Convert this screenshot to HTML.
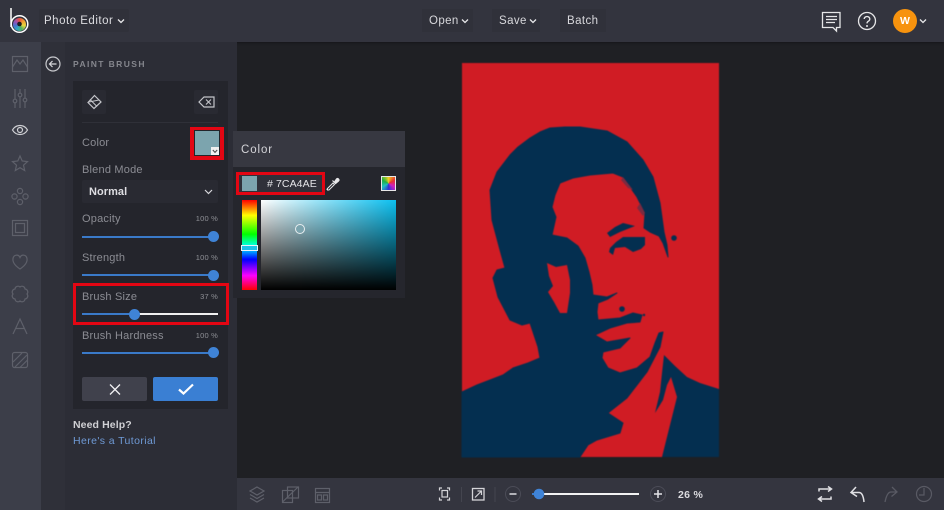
<!DOCTYPE html>
<html><head><meta charset="utf-8"><style>
html,body{margin:0;padding:0;width:944px;height:510px;overflow:hidden;background:#1f2024}
body{position:relative;font-family:"Liberation Sans",sans-serif}
.a{position:absolute}
.t{position:absolute;white-space:nowrap;line-height:14px}
.lab{font-size:11px;color:#8b8c93;letter-spacing:.2px}
.pct{font-size:7.5px;color:#8f9096;letter-spacing:.2px;text-align:right;width:50px}
.track{position:absolute;height:2px;background:#3a7ac9}
.knob{position:absolute;width:11px;height:11px;border-radius:50%;background:#3f83d6}
svg{position:absolute;overflow:visible}
.ic{fill:none;stroke:#5e606a;stroke-width:1.2}
.w{fill:none;stroke:#e6e6e8;stroke-width:1.3}
</style></head><body>
<!-- portrait -->
<svg style="left:0;top:0;filter:blur(.5px)" width="944" height="510">
<rect x="462" y="63" width="257" height="394" fill="#d01c24"/>
<path fill="#042f50" stroke="#042f50" stroke-width="1" stroke-linejoin="round" d="M550 128 565 127 580 127 607 131 627 142 643 160 653 177 660 203 664 232 667 245 668 257 663 243 659 236 650 232 644 228 645 213 637 197 623 177 613 173 590 175 573 178 560 183 555 195 552 207 556 217 552 235 567 238 578 246 585 258 589 272 592 285 593 295 607 297 617 293 608 299 598 303 597 312 598 320 620 318 633 313 642 315 640 322 627 323 610 328 595 335 607 342 630 338 620 348 603 352 602 358 608 368 620 373 637 368 650 357 655 343 659 333 663 332 660 347 647 372 627 398 608 413 623 423 620 433 597 440 588 445 580 457 462 457 462 392 477 385 503 375 513 368 528 363 540 358 538 347 530 323 522 325 510 320 498 297 493 278 497 270 505 268 500 250 492 220 490 190 497 172 510 155 518 147 530 138 540 132Z"/>
<path fill="#042f50" d="M664 355 675 366 687 377 700 383 719 389 719 457 662 457 670 425 677 397 671 377 667 385 663 400 655 413 660 392 662 373Z"/>
<path fill="#d01c24" d="M547 263 556 267 567 265 570 280 570 293 567 313 560 313 554 302 548 292 553 286 549 276Z"/>
<path fill="#042f50" d="M607 233 615 227 623 223 635 226 620 232 610 237ZM610 248 616 242 623 237 645 237 645 245 641 249 633 252 625 247 615 248 613 255 609 252Z"/>
<circle cx="674" cy="238" r="2.8" fill="#042f50"/><circle cx="622" cy="309" r="2.8" fill="#042f50"/><circle cx="644" cy="315" r="1.2" fill="#042f50"/>
<path fill="#7c2a40" d="M623 177 633 190 628 188 621 180ZM640 203 645 213 643 216 637 208Z"/>
</svg>

<!-- top bar -->
<div class="a" style="left:0;top:0;width:944px;height:42px;background:#33343e;box-shadow:0 1px 2px #15161a"></div>
<!-- logo -->
<div class="a" style="left:13px;top:18px;width:13px;height:13px;border-radius:50%;background:conic-gradient(#e9503f,#f0a030,#e8d840,#50b060,#30a8c0,#4a70d0,#a050b0,#e9503f)"></div>
<svg style="left:0;top:0" width="40" height="42">
<path d="M11 8V27" stroke="#fff" stroke-width="1.5" fill="none"/>
<circle cx="19.5" cy="24" r="8.300" fill="none" stroke="#fff" stroke-width="1.500"/>
<circle cx="19.500" cy="24" r="2.300" fill="#1d1e22"/>
</svg>
<div class="a" style="left:39px;top:9px;width:90px;height:23px;background:#30313a;border-radius:2px"></div>
<div class="t" style="left:44px;top:14px;font-size:11.5px;color:#dcdce0;letter-spacing:.5px">Photo Editor</div>
<svg style="left:117px;top:18px" width="8" height="6"><path d="M1 1.5 4 4.5 7 1.5" class="w" stroke-width="1"/></svg>
<div class="a" style="left:422px;top:9px;width:51px;height:23px;background:#30313a"></div>
<div class="a" style="left:492px;top:9px;width:48px;height:23px;background:#30313a"></div>
<div class="a" style="left:560px;top:9px;width:46px;height:23px;background:#30313a"></div>
<div class="t" style="left:429px;top:14px;font-size:11.5px;color:#d8d8dc;letter-spacing:.4px">Open</div>
<svg style="left:461px;top:18px" width="8" height="6"><path d="M1 1.5 4 4.5 7 1.5" class="w" stroke-width="1"/></svg>
<div class="t" style="left:499px;top:14px;font-size:11.5px;color:#d8d8dc;letter-spacing:.4px">Save</div>
<svg style="left:529px;top:18px" width="8" height="6"><path d="M1 1.5 4 4.5 7 1.5" class="w" stroke-width="1"/></svg>
<div class="t" style="left:567px;top:14px;font-size:11.5px;color:#d8d8dc;letter-spacing:.4px">Batch</div>
<!-- top right -->
<svg style="left:820px;top:10px" width="22" height="22"><path d="M2.5 2.5H20V17.5H16.5V21L13 17.5H2.5Z" class="w" stroke-width="1.2"/><path d="M6 6.5H17M6 9.5H17M6 12.5H15" class="w" stroke-width="1"/></svg>
<svg style="left:857px;top:11px" width="20" height="20"><circle cx="10" cy="10" r="8.5" class="w" stroke-width="1.2"/><path d="M7.2 8a2.8 2.5 0 1 1 4.2 2.2c-1 .6-1.4 1-1.4 2.2" class="w" stroke-width="1.5"/><circle cx="10" cy="15" r="1" fill="#e6e6e8"/></svg>
<div class="a" style="left:893px;top:9px;width:24px;height:24px;border-radius:50%;background:#f7930e"></div>
<div class="t" style="left:893px;top:14px;width:24px;text-align:center;font-size:10.5px;font-weight:bold;color:#fff">W</div>
<svg style="left:919px;top:18px" width="8" height="6"><path d="M1 1.5 4 4.5 7 1.5" class="w" stroke-width="1"/></svg>

<!-- left rail -->
<div class="a" style="left:0;top:42px;width:41px;height:468px;background:#3c3e49"></div>
<div class="a" style="left:41px;top:42px;width:196px;height:468px;background:#2c2d36"></div>
<div class="a" style="left:41px;top:42px;width:24px;height:468px;background:#2f3039"></div>
<svg style="left:0;top:42px" width="41" height="340">
<g class="ic">
<rect x="12.5" y="14.5" width="15" height="15"/><path d="M12.5 25 17 18 20 22 23 18 27.5 25"/>
<path d="M15 47V66M20 47V66M25 47V66" /><circle cx="15" cy="59" r="1.8" fill="#3c3e49"/><circle cx="20" cy="53" r="1.8" fill="#3c3e49"/><circle cx="25" cy="58" r="1.8" fill="#3c3e49"/>
<path d="M12.5 88C16 82 24 82 27.5 88 24 94 16 94 12.5 88Z" stroke="#cfd0d4"/><circle cx="20" cy="88" r="2.5" stroke="#cfd0d4"/>
<path d="M20 114 22.2 119 27.5 119.6 23.5 123.2 24.7 128.5 20 125.7 15.3 128.5 16.5 123.2 12.5 119.6 17.8 119Z"/>
<circle cx="20" cy="149" r="2.6"/><circle cx="20" cy="160" r="2.6"/><circle cx="14.5" cy="154.5" r="2.6"/><circle cx="25.5" cy="154.5" r="2.6"/>
<rect x="12.5" y="178.5" width="15" height="15"/><rect x="15.5" y="181.5" width="9" height="9"/>
<path d="M20 227C14 223 12.5 219.5 13 216.5 13.7 212.5 18.5 212 20 215.5 21.5 212 26.3 212.5 27 216.5 27.5 219.5 26 223 20 227Z"/>
<path d="M20 245A3 3 0 0 1 25 247A3 3 0 0 1 27 252A3 3 0 0 1 25 257A3 3 0 0 1 20 259A3 3 0 0 1 15 257A3 3 0 0 1 13 252A3 3 0 0 1 15 247A3 3 0 0 1 20 245Z"/>
<path d="M13 292 20 277 27 292M15.5 286.5H24.5"/>
<rect x="12.5" y="310.5" width="15" height="15" rx="2"/><path d="M13 320 22 311M15 325 27 313M20 325.5 27.5 318" />
</g></svg>
<svg style="left:45px;top:56px" width="16" height="16"><circle cx="8" cy="8" r="7" fill="none" stroke="#c8c9cd" stroke-width="1.2"/><path d="M11.5 8H4.5M7.5 5 4.5 8 7.5 11" fill="none" stroke="#d8d8dc" stroke-width="1.2"/></svg>
<div class="t" style="left:73px;top:57px;font-size:8.5px;font-weight:bold;color:#85868d;letter-spacing:1.4px">PAINT BRUSH</div>

<!-- card -->
<div class="a" style="left:73px;top:81px;width:155px;height:328px;background:#24252c"></div>
<div class="a" style="left:82px;top:90px;width:24px;height:24px;background:#292a32;border-radius:2px"></div>
<div class="a" style="left:194px;top:90px;width:24px;height:24px;background:#292a32;border-radius:2px"></div>
<svg style="left:82px;top:90px" width="24" height="24"><path d="M12.5 5.5 19 12 12 18.5 6 12.5Z" fill="none" stroke="#c4c5ca" stroke-width="1.2"/><path d="M8 9.5 15 16.5M7 12 17 10" stroke="#c4c5ca" stroke-width="1"/></svg>
<svg style="left:194px;top:90px" width="24" height="24"><path d="M5 12 10 7H20V17H10Z" fill="none" stroke="#c4c5ca" stroke-width="1.2"/><path d="M12 9.5 17 14.5M17 9.5 12 14.5" stroke="#c4c5ca" stroke-width="1.1"/></svg>
<div class="a" style="left:82px;top:122px;width:136px;height:1px;background:#2f3038"></div>

<div class="t lab" style="left:82px;top:136px">Color</div>
<div class="a" style="left:190px;top:127px;width:34px;height:33px;background:#e30613"></div>
<div class="a" style="left:195px;top:131px;width:24px;height:24px;background:#7ca4ae;outline:1px solid #23242a"></div>
<div class="a" style="left:211px;top:147px;width:8px;height:8px;background:#f0f0f0"></div>
<svg style="left:212px;top:149px" width="6" height="5"><path d="M.8 1 3 3.4 5.2 1" fill="none" stroke="#444" stroke-width="1"/></svg>
<div class="t lab" style="left:82px;top:163px">Blend Mode</div>
<div class="a" style="left:82px;top:180px;width:136px;height:23px;background:#292a32;border-radius:2px"></div>
<div class="t" style="left:89px;top:185px;font-size:11px;font-weight:bold;color:#dedee2;letter-spacing:.05px">Normal</div>
<svg style="left:204px;top:189px" width="9" height="6"><path d="M1 1 4.5 4.5 8 1" fill="none" stroke="#d8d8dc" stroke-width="1.2"/></svg>

<div class="t lab" style="left:82px;top:212px">Opacity</div><div class="t pct" style="left:168px;top:212px">100 %</div>
<div class="track" style="left:82px;top:235.5px;width:131px"></div><div class="knob" style="left:208px;top:231px"></div>
<div class="t lab" style="left:82px;top:251px">Strength</div><div class="t pct" style="left:168px;top:251px">100 %</div>
<div class="track" style="left:82px;top:274px;width:131px"></div><div class="knob" style="left:208px;top:270px"></div>

<div class="a" style="left:73px;top:283px;width:156px;height:42px;box-sizing:border-box;border:3.5px solid #e30613"></div>
<div class="t lab" style="left:82px;top:290px">Brush Size</div><div class="t pct" style="left:168px;top:290px">37 %</div>
<div class="track" style="left:82px;top:313px;width:52px"></div>
<div class="a" style="left:134px;top:313px;width:84px;height:2px;background:#f0f0f0"></div>
<div class="knob" style="left:129px;top:308.5px"></div>

<div class="t lab" style="left:82px;top:329px">Brush Hardness</div><div class="t pct" style="left:168px;top:329px">100 %</div>
<div class="track" style="left:82px;top:352px;width:131px"></div><div class="knob" style="left:208px;top:347px"></div>

<div class="a" style="left:82px;top:377px;width:65px;height:24px;background:#40414c;border-radius:2px"></div>
<div class="a" style="left:153px;top:377px;width:65px;height:24px;background:#3a7fd3;border-radius:2px"></div>
<svg style="left:82px;top:377px" width="136" height="24"><path d="M28 7.5 38 17.5M38 7.5 28 17.5" stroke="#f0f0f2" stroke-width="1.3"/><path d="M97 12.5 101.5 16.5 111 7.5" fill="none" stroke="#fff" stroke-width="2.2"/></svg>

<div class="t" style="left:73px;top:418px;font-size:10.5px;font-weight:bold;color:#d0d0d4;letter-spacing:.1px">Need Help?</div>
<div class="t" style="left:73px;top:434px;font-size:10.5px;color:#6f9ad6;letter-spacing:.4px">Here's a Tutorial</div>

<!-- color popup -->
<div class="a" style="left:233px;top:131px;width:172px;height:167px;background:#25262d"></div>
<div class="a" style="left:233px;top:131px;width:172px;height:36px;background:#373841"></div>
<div class="t" style="left:241px;top:143px;font-size:11.5px;color:#d4d4d8;letter-spacing:.9px">Color</div>
<div class="a" style="left:236px;top:172px;width:89px;height:23px;box-sizing:border-box;border:3px solid #e30613;background:#30313a"></div>
<div class="a" style="left:242px;top:176px;width:15px;height:15px;background:#7ca4ae"></div>
<div class="t" style="left:267px;top:176.500px;font-size:10.5px;color:#e4e4e8;letter-spacing:.1px"># 7CA4AE</div>
<svg style="left:325px;top:177px" width="14" height="14"><path d="M2 12 1.5 12.5M2.5 11.5 8 6 9.5 7.5 4 13H2.5Z" fill="none" stroke="#e8e8ea" stroke-width="1"/><path d="M7.500 3.500 11 7M9.500 5 11.500 2a1.300 1.300 0 0 1 2 2L10.500 6.500" fill="#e8e8ea" stroke="#e8e8ea" stroke-width="1.200"/></svg>
<div class="a" style="left:381px;top:176px;width:15px;height:15px;box-sizing:border-box;border:1px solid #e8e8e8;background:conic-gradient(#f0d020,#e83030,#d020c0,#3030d0,#20c0c0,#20b040,#f0d020)"></div>
<div class="a" style="left:242px;top:200px;width:15px;height:90px;background:linear-gradient(to bottom,#f00 0%,#ff0 17%,#0f0 38%,#0ff 52%,#00f 66%,#f0f 84%,#f00 100%)"></div>
<div class="a" style="left:241px;top:245px;width:17px;height:6px;box-sizing:border-box;border:1px solid #e8f4f8;background:#1cc0ea"></div>
<div class="a" style="left:261px;top:200px;width:135px;height:90px;background:linear-gradient(to bottom,rgba(0,0,0,0),#000),linear-gradient(to right,#fff,#0cc0f0)"></div>
<div class="a" style="left:295px;top:224px;width:10px;height:10px;box-sizing:border-box;border-radius:50%;border:1.500px solid #e8eef0;background:#7ca4ae"></div>

<!-- bottom bar -->
<div class="a" style="left:237px;top:478px;width:707px;height:32px;background:#34353f"></div>
<svg style="left:237px;top:478px" width="707" height="32">
<g class="ic" transform="translate(0,4)">
<path d="M20 5 27 9 20 13 13 9ZM13 12.5 20 16.5 27 12.5M13 16 20 20 27 16"/>
<rect x="45.5" y="8.5" width="10" height="12"/><rect x="50.5" y="5" width="11" height="11"/><path d="M45.5 20 61 5"/>
<rect x="78.5" y="6.5" width="14" height="14"/><path d="M78.5 10.5H92.5M80.5 13H84.5V18H80.5ZM86.5 13H90.500V18H86.500Z"/>
</g>
<g fill="none" stroke="#d4d4d8" stroke-width="1.2" transform="translate(0,3.5)">
<path d="M202.5 9V6.5H205M210 6.5H212.5V9M212.5 16V18.5H210M205 18.500H202.500V16"/><rect x="205" y="9" width="5.5" height="6.5"/>
<rect x="235.5" y="7" width="11.5" height="11.5" stroke-width="1.3"/><path d="M238 16 244.500 9.500M240.500 9.500H244.500V13.500"/>
</g>
<path d="M224.500 9V24M258 9V24" stroke="#44454f" stroke-width="1"/>
<circle cx="276" cy="16" r="7.5" fill="none" stroke="#4b4c57"/><path d="M272.5 16H279.5" stroke="#dcdce0" stroke-width="1.5"/>
<path d="M302 16 H402" stroke="#f2f2f2" stroke-width="2"/><path d="M295 16H302" stroke="#3a7ac9" stroke-width="2"/><circle cx="302" cy="16" r="5.3" fill="#3f83d6"/>
<circle cx="421" cy="16" r="7.5" fill="none" stroke="#4b4c57"/><path d="M417 16H425M421 12V20" stroke="#e4e4e8" stroke-width="1.5"/>
</svg>
<div class="t" style="left:678px;top:488px;font-size:10.5px;font-weight:bold;color:#dcdce0;letter-spacing:.3px">26 %</div>
<svg style="left:780px;top:478px" width="164" height="32">
<g transform="translate(0,1)"><path d="M39 12.5V10H51M48 7.500 51.500 10 48 12.500M51 17.500V20H39M42 17.500 38.500 20 42 22.500" fill="none" stroke="#e0e0e4" stroke-width="1.5"/></g>
<g transform="translate(0,2)"><path d="M72 12.500H79C82 12.500 83.500 17 84 22M76 7 71 12.500 77 16.500" fill="none" stroke="#e0e0e4" stroke-width="1.5"/>
<path d="M116 12H111C108 12 106 17 105 22M112 7 117 12 111.500 16.500" fill="none" stroke="#595a64" stroke-width="1.3"/></g>
<circle cx="144" cy="16" r="7.5" fill="none" stroke="#595a64" stroke-width="1.2"/><path d="M144 10V17H139" fill="none" stroke="#595a64" stroke-width="1.2"/>
</svg>
</body></html>
